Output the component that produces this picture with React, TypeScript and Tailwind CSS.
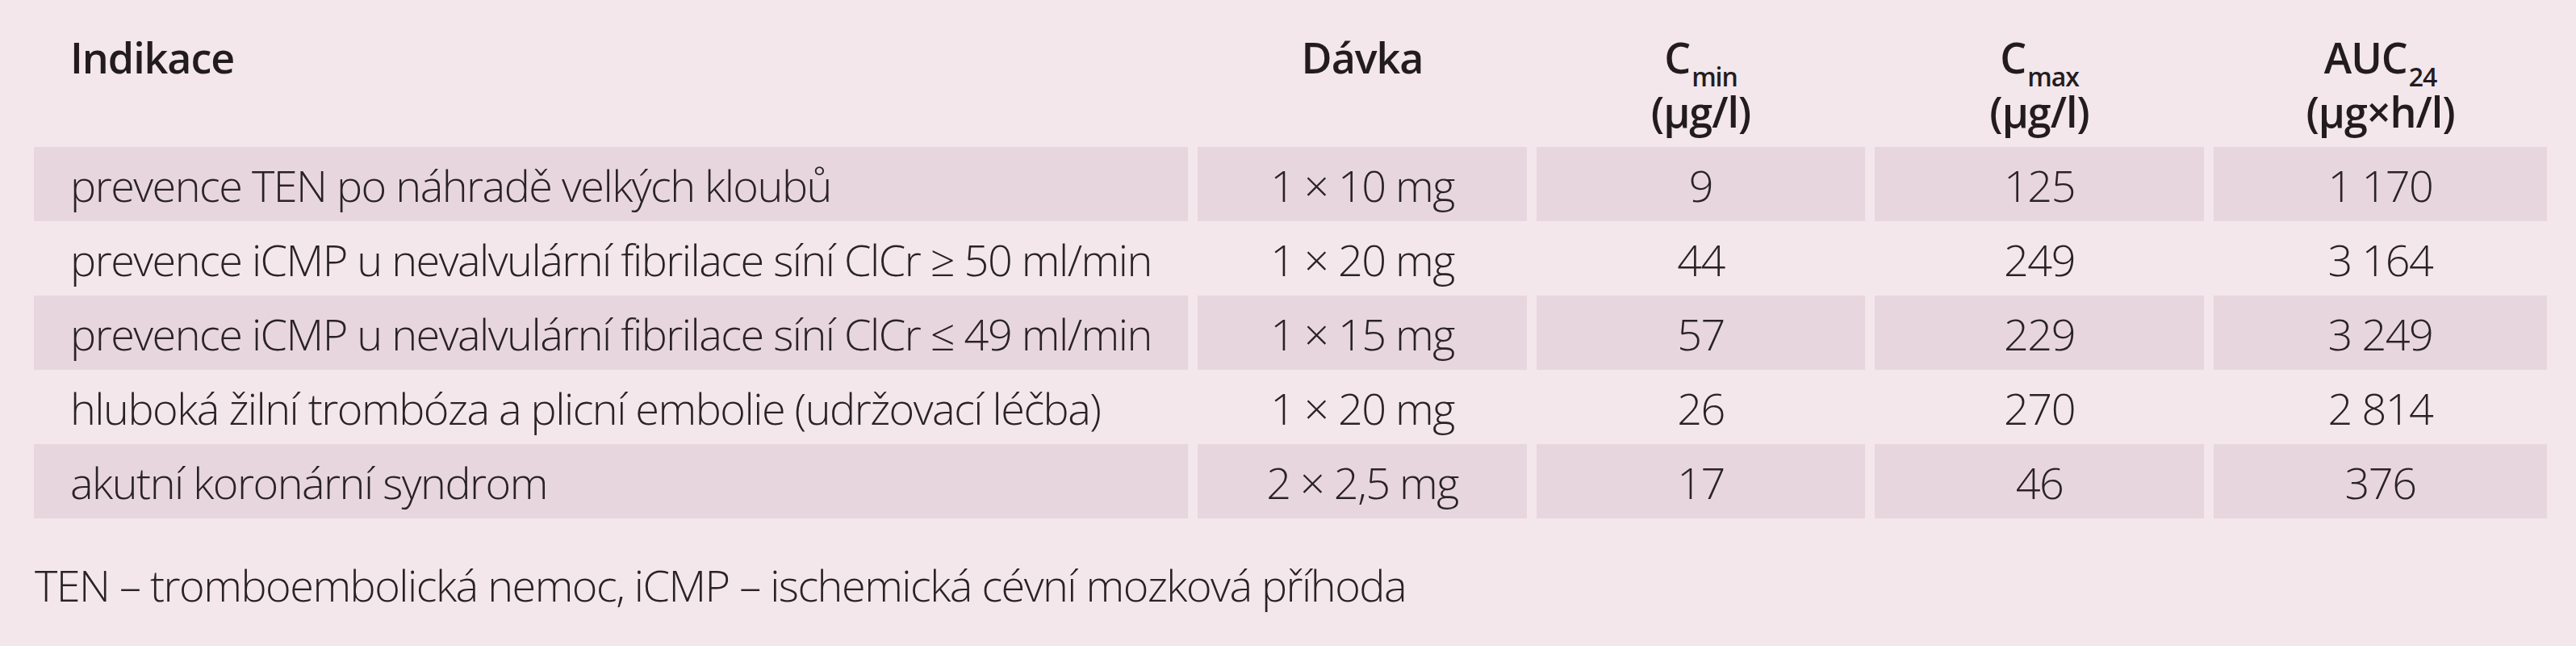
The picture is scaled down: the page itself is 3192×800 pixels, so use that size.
import React from 'react';

type Row = {
  indikace: string;
  davka: string;
  cmin: string;
  cmax: string;
  auc: string;
};

const ROWS: Row[] = [
  { indikace: 'prevence TEN po náhradě velkých kloubů', davka: '1 × 10 mg', cmin: '9', cmax: '125', auc: '1 170' },
  { indikace: 'prevence iCMP u nevalvulární fibrilace síní ClCr ≥ 50 ml/min', davka: '1 × 20 mg', cmin: '44', cmax: '249', auc: '3 164' },
  { indikace: 'prevence iCMP u nevalvulární fibrilace síní ClCr ≤ 49 ml/min', davka: '1 × 15 mg', cmin: '57', cmax: '229', auc: '3 249' },
  { indikace: 'hluboká žilní trombóza a plicní embolie (udržovací léčba)', davka: '1 × 20 mg', cmin: '26', cmax: '270', auc: '2 814' },
  { indikace: 'akutní koronární syndrom', davka: '2 × 2,5 mg', cmin: '17', cmax: '46', auc: '376' },
];

const GRID = 'grid grid-cols-[1430px_408px_407px_408px_413px] gap-x-[12px]';

function Sub({ children }: { children: React.ReactNode }) {
  return <span className="relative top-[16px] ml-[2px] text-[32px] leading-none font-semibold">{children}</span>;
}

function Unit({ children }: { children: React.ReactNode }) {
  return <div className="mt-[10px] leading-[48px]">{children}</div>;
}

export default function App() {
  return (
    <div className="w-[3192px] h-[800px] bg-[#f3e7ec] text-[#2a2326] font-['Open_Sans',sans-serif] overflow-hidden">
      <div className="pl-[42px]">
        {/* Header */}
        <div className={`${GRID} h-[182px] pt-[37px] text-[52px] leading-[67px] font-semibold tracking-[-0.02em] text-[#231c1f]`}>
          <div className="pl-[45px]">Indikace</div>
          <div className="text-center">Dávka</div>
          <div className="text-center">
            <div>
              C<Sub>min</Sub>
            </div>
            <Unit>(μg/l)</Unit>
          </div>
          <div className="text-center">
            <div>
              C<Sub>max</Sub>
            </div>
            <Unit>(μg/l)</Unit>
          </div>
          <div className="text-center">
            <div>
              AUC<Sub>24</Sub>
            </div>
            <Unit>(μg×h/l)</Unit>
          </div>
        </div>

        {/* Rows */}
        {ROWS.map((r, i) => {
          const shade = i % 2 === 0 ? 'bg-[#e8d6de]' : '';
          return (
            <div key={i} className={`${GRID} h-[92px] text-[54px] font-light tracking-[-0.028em]`}>
              <div className={`${shade} flex items-center pl-[45px] pt-[3px] whitespace-nowrap`}>{r.indikace}</div>
              <div className={`${shade} flex items-center justify-center pt-[3px]`}>{r.davka}</div>
              <div className={`${shade} flex items-center justify-center pt-[3px]`}>{r.cmin}</div>
              <div className={`${shade} flex items-center justify-center pt-[3px]`}>{r.cmax}</div>
              <div className={`${shade} flex items-center justify-center pt-[3px]`}>{r.auc}</div>
            </div>
          );
        })}
      </div>

      {/* Footer */}
      <p className="mt-[49px] pl-[43px] text-[54px] leading-[66px] font-light tracking-[-0.028em] whitespace-nowrap">
        TEN – tromboembolická nemoc, iCMP – ischemická cévní mozková příhoda
      </p>
    </div>
  );
}
